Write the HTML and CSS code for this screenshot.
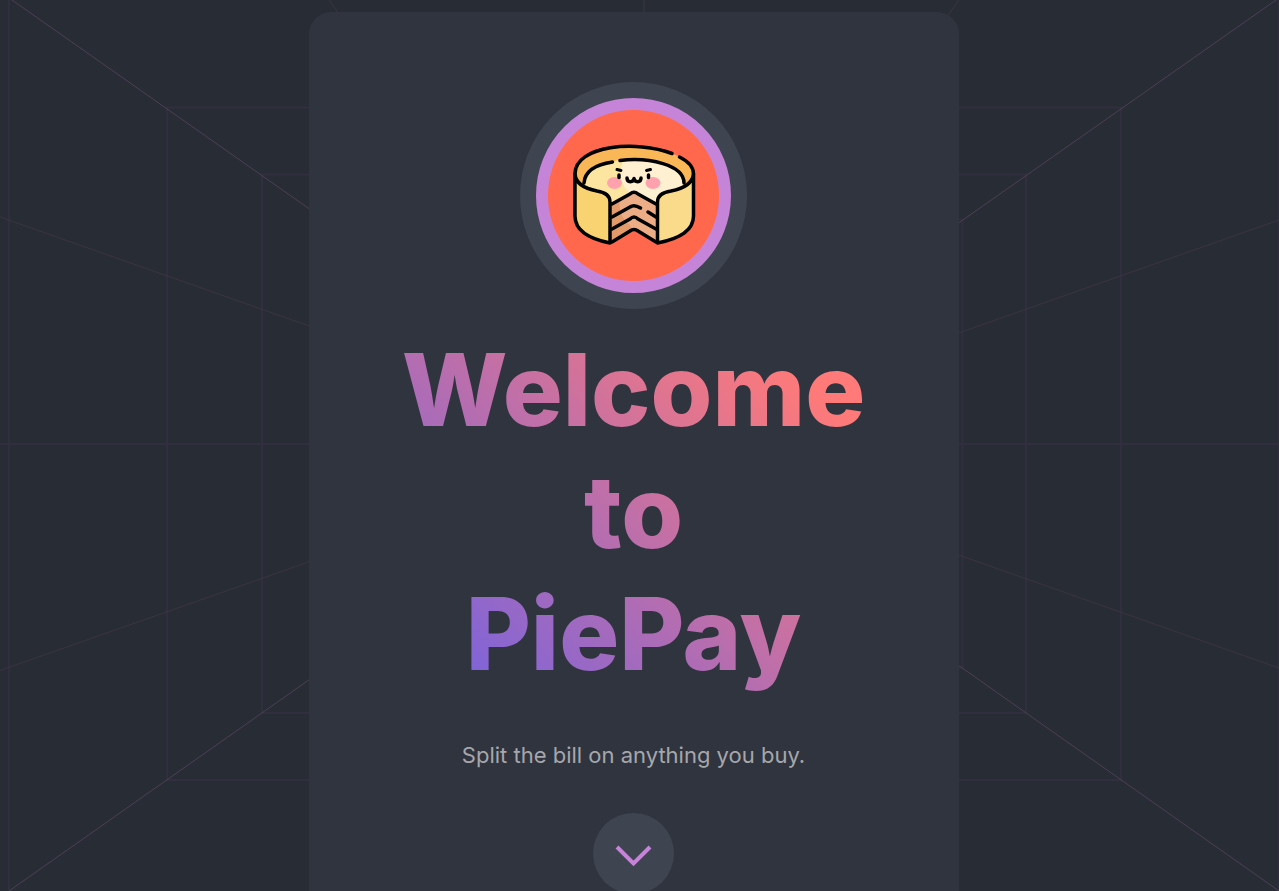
FILE: index.html
```html
<!DOCTYPE html>
<html lang="en">
<head>
<meta charset="utf-8">
<meta name="viewport" content="width=device-width, initial-scale=1">
<title>PiePay</title>
<link rel="stylesheet" href="styles.css">
</head>
<body class="page">
<svg class="backdrop" viewBox="0 0 1279 891" preserveAspectRatio="xMidYMid slice" fill="none" aria-hidden="true">
  <g stroke="#312f3d" stroke-width="2">
    <path d="M9 0V891M1279 0V891M0 444H1279"/>
    <path d="M167 107.500H1121V780H167ZM262 174.500H1026V713H262ZM326 219.500H962.500V668H326Z"/>
  </g>
  <g stroke="#3b3442" stroke-width="1">
    <path d="M0 217L644 444L1279 220M0 670.500L644 444L1279 668M329 0L644 444L959 0M329 891L644 444L959 891M644 0V891"/>
  </g>
  <path stroke="#4d3f54" stroke-width="1" d="M12 0L644 444L1276 0M9 891L644 444L1279 891"/>
</svg>
<main class="card">
  <div class="logo">
    <svg class="logo-art" viewBox="565 136 140 120" role="img" aria-label="PiePay pie" fill="none" stroke="#000" stroke-width="3.500" stroke-linecap="round" stroke-linejoin="round">
      <ellipse cx="635" cy="174" rx="59" ry="27" fill="#fab758" stroke="none"/>
      <path d="M585 184C586 151 685 151 685 184L658 208L635 192L612 208Z" fill="#fff0d2" stroke="none"/>
      <path d="M585 184C585 168 604 161 625 160C617 174 624 190 633 193L612 207Z" fill="#fce5a1" stroke="none"/>
      <path d="M612 204L635 192L659 204V243L635 229L612 243Z" fill="#ecac85" stroke="none"/>
      <path d="M612 204L621 199Q618 212 628 223Q633 225 632 231L612 243Z" fill="#e39a6b" stroke="none"/>
      <path d="M576 174Q577 187 598 191Q611 193 611 202V243Q576 236 576 216Z" fill="#f9d371"/>
      <path d="M694.500 174Q693 187 672 191Q658.500 193 658.500 202V243Q694.500 236 694.500 216Z" fill="#fadb8b"/>
      <path d="M576 174C576 145 638 140 673 153.500M680.500 157Q694.500 164 694.500 174M585 183C586 169 600 164 613.500 162M621 160.500C650 157 685 165 685 183"/>
      <path d="M613 204L631 194Q635 190.500 639 194L657 204M613 217L631 207Q635 204 641.500 208M649 212L657 217M613 229L631 219Q635 215 639 219L657 229M613 242L631 231Q635 228 639 231L657 242"/>
      <ellipse cx="615.500" cy="183" rx="7.500" ry="6" fill="#ffa2ae" stroke="none"/>
      <ellipse cx="654" cy="183" rx="7.500" ry="6" fill="#ffa2ae" stroke="none"/>
      <path stroke-width="3" d="M618 169.500L622 170.500M647.500 170.500L651.500 169.500"/>
      <path stroke-width="3.500" d="M620 175V177.500M649.500 175V177.500"/>
      <path d="M628 178C628 183 634.500 182.500 635 178.500C635.500 182.500 642 183 642 178"/>
    </svg>
  </div>
  <h1 class="title">Welcome<br>to<br>PiePay</h1>
  <p class="tagline">Split the bill on anything you buy.</p>
  <button class="next" type="button" aria-label="Continue">
    <svg class="next-icon" viewBox="0 0 36 20" fill="none" stroke="#c684d8" stroke-width="4" aria-hidden="true"><path d="M1 1L17.500 17.500L34 1"/></svg>
  </button>
</main>
</body>
</html>
```
FILE: styles.css
```css
* {
  box-sizing: border-box;
}

.page {
  margin: 0;
  min-height: 100vh;
  padding: 12px 12px 0 0;
  background: #282c35;
  font-family: Inter, "Liberation Sans", sans-serif;
}

.backdrop {
  position: fixed;
  inset: 0;
  width: 100%;
  height: 100%;
  z-index: -1;
}

.card {
  display: flex;
  flex-direction: column;
  align-items: center;
  max-width: 650px;
  margin: 0 auto;
  padding: 70px 80px;
  border-radius: 22px;
  background: #30343f;
}

.logo {
  display: grid;
  place-items: center;
  width: 227px;
  height: 227px;
  border: 16px solid #3f4451;
  border-radius: 50%;
  background: radial-gradient(circle, #ff684d 85px, #c684d8 86px);
}

.logo-art {
  width: 140px;
  height: 120px;
}

.title {
  margin: 20px 0 0;
  padding-bottom: 10px;
  font-size: 100px;
  font-weight: 800;
  line-height: 122px;
  text-align: center;
  color: transparent;
  background: linear-gradient(45deg, #8064d8 12%, #ff7a79 87%);
  background-clip: text;
  -webkit-background-clip: text;
}

.tagline {
  margin: 34px 0 0;
  font-size: 22px;
  line-height: 32px;
  text-align: center;
  color: #a6a7ab;
}

.next {
  display: grid;
  place-items: center;
  width: 81px;
  height: 81px;
  margin-top: 42px;
  padding: 4px 0 0;
  border: 0;
  border-radius: 50%;
  background: #3f4451;
  cursor: pointer;
}

.next-icon {
  width: 36px;
  height: 20px;
  overflow: visible;
}
```
